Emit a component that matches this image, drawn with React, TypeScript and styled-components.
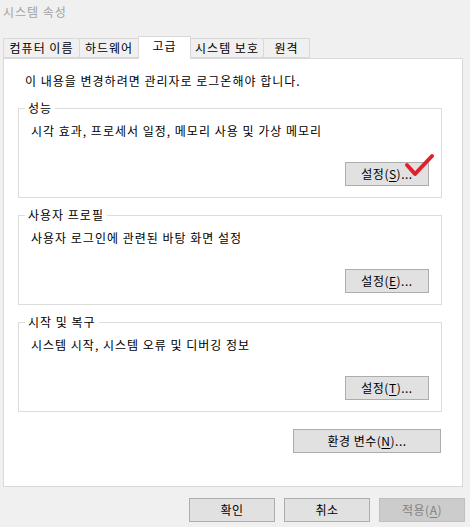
import React from 'react';
import styled, { createGlobalStyle } from 'styled-components';

const GlobalStyle = createGlobalStyle`
  html, body {
    margin: 0;
    padding: 0;
    background: #f0f0f0;
  }
  body {
    font-family: "Noto Sans CJK KR", "Noto Sans", sans-serif;
    font-size: 12px;
    letter-spacing: 1px;
    color: #000;
  }
`;

const Window = styled.div`
  width: 470px;
  height: 527px;
  box-sizing: border-box;
  padding: 0 5px 0 3px;
  display: flex;
  flex-direction: column;
  background: #f0f0f0;
`;

const Title = styled.div`
  height: 24px;
  line-height: 24px;
  color: #a3a3a3;
  font-size: 12px;
`;

const TabStrip = styled.div`
  height: 34px;
  display: flex;
  align-items: flex-end;
`;

const Tab = styled.div<{ $w: number; $active?: boolean }>`
  box-sizing: border-box;
  width: ${(p) => p.$w}px;
  height: ${(p) => (p.$active ? 23 : 20)}px;
  margin-left: -1px;
  margin-bottom: ${(p) => (p.$active ? -1 : 0)}px;
  border: 1px solid #d9d9d9;
  border-bottom: ${(p) => (p.$active ? 'none' : '1px solid #d9d9d9')};
  background: ${(p) => (p.$active ? '#fff' : '#f0f0f0')};
  position: relative;
  z-index: ${(p) => (p.$active ? 1 : 0)};
  display: flex;
  justify-content: center;
  align-items: ${(p) => (p.$active ? 'flex-start' : 'center')};
  padding-top: ${(p) => (p.$active ? 1 : 0)}px;
  line-height: 16px;
  white-space: nowrap;

  &:first-child {
    margin-left: 0;
  }
`;

const Panel = styled.div`
  box-sizing: border-box;
  width: 460px;
  height: 429px;
  border: 1px solid #d9d9d9;
  background: #fff;
  padding: 14px 0 0 14px;
  display: flex;
  flex-direction: column;
`;

const Intro = styled.div`
  line-height: 16px;
  margin-left: 7px;
`;

const Group = styled.fieldset<{ $first?: boolean }>`
  box-sizing: border-box;
  width: 424px;
  margin: ${(p) => (p.$first ? 11 : 9)}px 0 0 0;
  padding: 0 12px 11px 12px;
  border: 1px solid #dcdcdc;
  min-inline-size: 0;
  display: flex;
  flex-direction: column;
`;

const Legend = styled.legend`
  margin-left: -6px;
  padding: 0 3px;
  line-height: 16px;
`;

const GroupText = styled.div`
  line-height: 16px;
  margin-top: 7px;
`;

const GroupActions = styled.div`
  margin-top: 23px;
  display: flex;
  justify-content: flex-end;
`;

const Button = styled.button<{ $w: number; $disabled?: boolean }>`
  position: relative;
  box-sizing: border-box;
  width: ${(p) => p.$w}px;
  height: 24px;
  padding: 0;
  border: 1px solid ${(p) => (p.$disabled ? '#bfbfbf' : '#adadad')};
  background: ${(p) => (p.$disabled ? '#cccccc' : '#e1e1e1')};
  color: ${(p) => (p.$disabled ? '#838383' : '#000')};
  font-family: inherit;
  font-size: 12px;
  letter-spacing: 0.5px;
  line-height: 16px;
  display: flex;
  align-items: center;
  justify-content: center;

  u {
    text-underline-offset: 2px;
  }
`;

const Check = styled.svg`
  position: absolute;
  left: 57px;
  top: -9px;
  width: 30px;
  height: 24px;
  overflow: visible;
`;

const EnvRow = styled.div`
  width: 424px;
  margin-top: 17px;
  display: flex;
  justify-content: flex-end;
  padding-right: 1px;
  box-sizing: border-box;
`;

const Footer = styled.div`
  display: flex;
  justify-content: flex-end;
  gap: 9px;
  padding-top: 11px;
`;

const tabs = [
  { label: '컴퓨터 이름', w: 77 },
  { label: '하드웨어', w: 60 },
  { label: '고급', w: 53, active: true },
  { label: '시스템 보호', w: 74 },
  { label: '원격', w: 47 },
];

const groups = [
  { title: '성능', text: '시각 효과, 프로세서 일정, 메모리 사용 및 가상 메모리', key: 'S', check: true },
  { title: '사용자 프로필', text: '사용자 로그인에 관련된 바탕 화면 설정', key: 'E' },
  { title: '시작 및 복구', text: '시스템 시작, 시스템 오류 및 디버깅 정보', key: 'T' },
];

export default function App() {
  return (
    <Window>
      <GlobalStyle />
      <Title>시스템 속성</Title>
      <TabStrip>
        {tabs.map((t) => (
          <Tab key={t.label} $w={t.w} $active={t.active}>
            {t.label}
          </Tab>
        ))}
      </TabStrip>
      <Panel>
        <Intro>이 내용을 변경하려면 관리자로 로그온해야 합니다.</Intro>
        {groups.map((g, i) => (
          <Group key={g.title} $first={i === 0}>
            <Legend>{g.title}</Legend>
            <GroupText>{g.text}</GroupText>
            <GroupActions>
              <Button $w={84}>
                설정(<u>{g.key}</u>)...
                {g.check && (
                  <Check viewBox="0 0 30 24">
                    <path
                      d="M4 11 L12 20 L29 2"
                      fill="none"
                      stroke="#e0212b"
                      strokeWidth="4"
                      strokeLinecap="round"
                      strokeLinejoin="round"
                    />
                  </Check>
                )}
              </Button>
            </GroupActions>
          </Group>
        ))}
        <EnvRow>
          <Button $w={148}>
            환경 변수(<u>N</u>)...
          </Button>
        </EnvRow>
      </Panel>
      <Footer>
        <Button $w={86}>확인</Button>
        <Button $w={86}>취소</Button>
        <Button $w={86} $disabled>
          적용(<u>A</u>)
        </Button>
      </Footer>
    </Window>
  );
}
